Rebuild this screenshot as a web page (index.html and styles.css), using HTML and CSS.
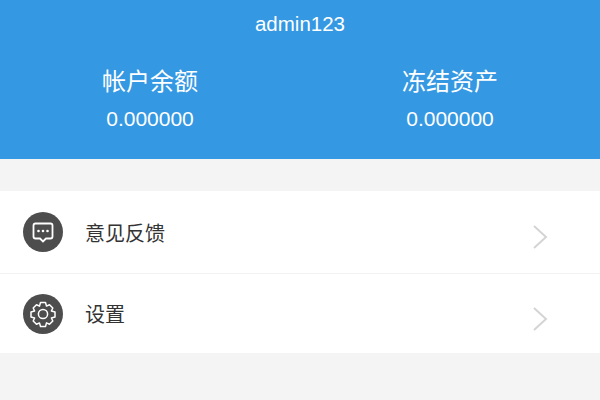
FILE: index.html
```html
<!DOCTYPE html>
<html lang="zh-CN">
<head>
    <meta charset="UTF-8">
    <title>用户中心</title>
    <link rel="stylesheet" href="styles.css">
</head>
<body>
    <header class="account">
        <div class="username">admin123</div>
        <div class="balances">
            <div class="balance">
                <div class="balance-label">帐户余额</div>
                <div class="balance-value">0.000000</div>
            </div>
            <div class="balance">
                <div class="balance-label">冻结资产</div>
                <div class="balance-value">0.000000</div>
            </div>
        </div>
    </header>

    <div class="menu">
        <div class="menu-row">
            <span class="menu-icon">
                <svg viewBox="0 0 40 40" width="40" height="40">
                    <path d="M12.5 11.5h15a2 2 0 0 1 2 2v11a2 2 0 0 1-2 2h-4.5l-3 3-3-3h-4.5a2 2 0 0 1-2-2v-11a2 2 0 0 1 2-2z" fill="none" stroke="#fff" stroke-width="1.8"/>
                    <circle cx="15.5" cy="19" r="1.3" fill="#fff"/>
                    <circle cx="20" cy="19" r="1.3" fill="#fff"/>
                    <circle cx="24.5" cy="19" r="1.3" fill="#fff"/>
                </svg>
            </span>
            <span class="menu-text">意见反馈</span>
            <svg class="chevron" viewBox="0 0 16 26" width="16" height="26">
                <path d="M2 2l12 11L2 24" fill="none" stroke="#d4d4d4" stroke-width="2"/>
            </svg>
        </div>
        <div class="menu-row">
            <span class="menu-icon">
                <svg viewBox="0 0 40 40" width="40" height="40">
                    <path d="M17.5 8.5h5l1 3.6 3-1.4 3.3 3.3-1.4 3 3.6 1v5l-3.6 1 1.4 3-3.3 3.3-3-1.4-1 3.6h-5l-1-3.6-3 1.4-3.3-3.3 1.4-3-3.6-1v-5l3.6-1-1.4-3 3.3-3.3 3 1.4z" fill="none" stroke="#fff" stroke-width="1.5" stroke-linejoin="round"/>
                    <circle cx="20" cy="20" r="4.6" fill="none" stroke="#fff" stroke-width="1.5"/>
                </svg>
            </span>
            <span class="menu-text">设置</span>
            <svg class="chevron" viewBox="0 0 16 26" width="16" height="26">
                <path d="M2 2l12 11L2 24" fill="none" stroke="#d4d4d4" stroke-width="2"/>
            </svg>
        </div>
    </div>
</body>
</html>
```

FILE: styles.css
```css
html, body {
    height: 100%;
}

body {
    margin: 0;
    background-color: #f4f4f4;
    font-family: "Liberation Sans", "Noto Sans CJK SC", sans-serif;
    overflow: hidden;
}

.account {
    height: 159px;
    background-color: #3498e3;
    color: #fff;
    text-align: center;
}

.username {
    padding-top: 12px;
    font-size: 20.5px;
    line-height: 24px;
}

.balances {
    display: flex;
    padding-top: 31px;
}

.balance {
    width: 50%;
}

.balance-label {
    font-size: 24px;
    line-height: 30px;
}

.balance-value {
    margin-top: 10px;
    font-size: 21px;
    line-height: 24px;
}

.menu {
    margin-top: 32px;
    background-color: #fff;
}

.menu-row {
    display: flex;
    align-items: center;
    height: 83px;
    padding: 0 52px 0 23px;
    box-sizing: border-box;
    border-bottom: 1px solid #f2f2f2;
}

.menu-row:last-child {
    height: 79px;
    border-bottom: none;
}

.menu-icon {
    display: flex;
    align-items: center;
    justify-content: center;
    width: 40px;
    height: 40px;
    border-radius: 50%;
    background-color: #4d4d4d;
}

.menu-text {
    flex: 1;
    margin-left: 22px;
    font-size: 20px;
    color: #333;
}

.chevron {
    display: block;
    margin-top: 10px;
}
```
